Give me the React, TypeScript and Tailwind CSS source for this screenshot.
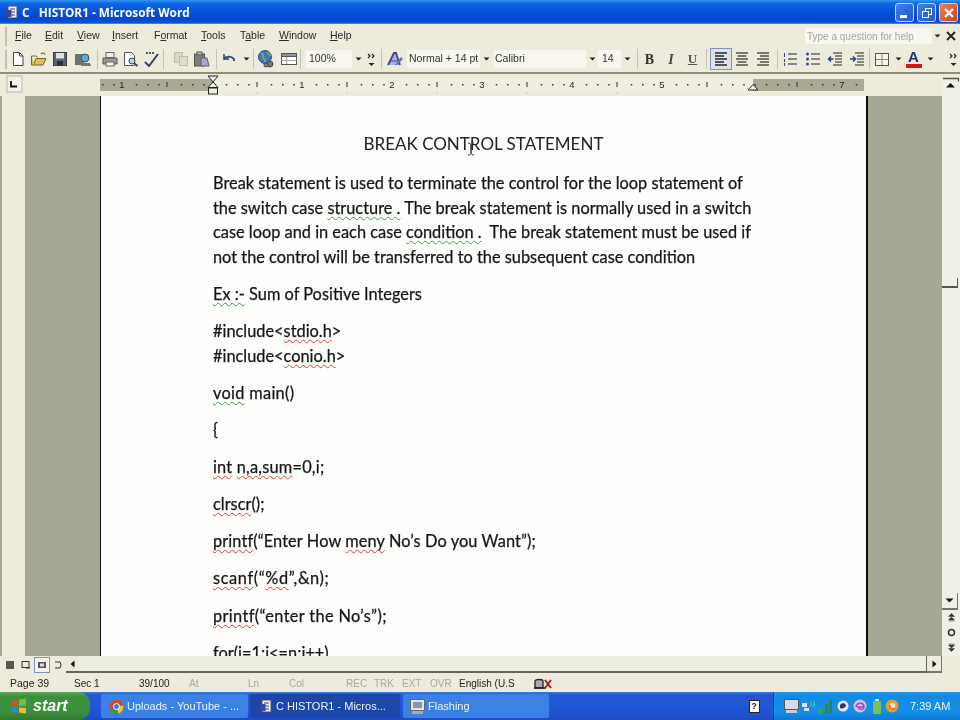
import React from "react";

const S = ({ w = 16, h = 16, children }: { w?: number; h?: number; children: React.ReactNode }) => (
  <svg width={w} height={h} viewBox={`0 0 ${w} ${h}`} fill="none" className="block">{children}</svg>
);

const Drop = () => <S w={7} h={4}><path d="M0.5 0.5h6L3.5 3.5z" fill="#222" /></S>;
const More = () => (
  <S w={9} h={15}>
    <path d="M1 2l2 2-2 2M5 2l2 2-2 2" stroke="#222" strokeWidth="1.1" />
    <path d="M1.5 11h6L4.5 14z" fill="#222" />
  </S>
);
const Sep = () => (
  <div className="w-[3px] h-[20px] shrink-0 flex justify-center">
    <div className="w-[1px] h-full bg-[#c4c3b0]" />
  </div>
);

const New = () => <S><path d="M3.5 1.5h6l3.5 3.5v9.5h-9.5z" fill="#fff" stroke="#444" /><path d="M9.5 1.5v3.5h3.5" stroke="#444" /></S>;
const Open = () => (
  <S w={18}>
    <path d="M1.5 5v9h11.500l3-6.500h-10l-2 5" fill="#e0bf50" stroke="#7a6220" />
    <path d="M1.500 5h5l1 1.500" stroke="#7a6220" />
    <path d="M11 3c1.500-1.500 3-1 4 .5" stroke="#3d8a3d" strokeWidth="1.300" />
  </S>
);
const Save = () => (
  <S>
    <rect x="1.500" y="1.500" width="13" height="13" fill="#5c6470" stroke="#383d44" />
    <rect x="4" y="2" width="8" height="5.500" fill="#dfe2e6" />
    <rect x="5" y="10" width="6" height="4" fill="#2c3036" />
  </S>
);
const Perm = () => (
  <S w={18}>
    <rect x="1" y="3" width="9" height="11" fill="#6f7370" />
    <circle cx="11" cy="7" r="4" fill="#5fa8c8" stroke="#355" />
    <rect x="7" y="12" width="9" height="3" fill="#6a7a80" />
    <path d="M14 14h3" stroke="#b33" />
  </S>
);
const Print = () => (
  <S w={18}>
    <rect x="5" y="1.500" width="8" height="5" fill="#eee" stroke="#666" />
    <path d="M2 7h14v6H2z" fill="#9a9a8e" stroke="#555" />
    <rect x="5" y="11" width="8" height="4" fill="#f2f2f2" stroke="#666" />
  </S>
);
const Preview = () => (
  <S w={18}>
    <path d="M2.500 1.500h7l3 3v10h-10z" fill="#fff" stroke="#555" />
    <circle cx="10" cy="10" r="3" fill="#bcd6e6" stroke="#345" />
    <path d="M12 12l3.500 3" stroke="#345" strokeWidth="1.800" />
  </S>
);
const Spell = () => (
  <S w={17}>
    <path d="M2 11l4 4 9-12" stroke="#3a3f6e" strokeWidth="2" />
    <path d="M3 2h9" stroke="#555" strokeDasharray="2 1" strokeWidth="2" />
  </S>
);
const Copy = () => (
  <S>
    <rect x="1.500" y="1.500" width="8" height="10" fill="#d7d6c8" stroke="#bfbeae" />
    <rect x="6.500" y="5.500" width="8" height="9" fill="#dedccd" stroke="#bfbeae" />
  </S>
);
const Paste = () => (
  <S w={18}>
    <rect x="1.500" y="3" width="10" height="12" fill="#807f70" stroke="#55554a" />
    <rect x="4" y="1" width="5" height="3" fill="#bbb" stroke="#555" />
    <path d="M8 7h6l2 8H8z" fill="#a8a6cf" stroke="#5a5a8c" />
  </S>
);
const Undo = () => (
  <S><path d="M3 3v5h5" stroke="#2d3f73" strokeWidth="1.500" /><path d="M3 8c2-3 7-3.500 10 0v2" stroke="#2d3f73" strokeWidth="1.800" /></S>
);
const Globe = () => (
  <S w={19} h={18}>
    <circle cx="8" cy="7" r="6.500" fill="#3d79b8" stroke="#27517f" />
    <path d="M4 3c2 1 3 2 2 4s3 2 2 5M10 2c1 2 3 2 4 4" stroke="#7fb070" strokeWidth="1.600" />
    <circle cx="13" cy="14" r="3" fill="#777" stroke="#444" />
    <circle cx="9" cy="15" r="2" fill="#888" stroke="#444" />
  </S>
);
const TableIcon = () => (
  <S w={18}>
    <rect x="1.500" y="2.500" width="15" height="11" fill="#fff" stroke="#555" />
    <rect x="1.500" y="2.500" width="15" height="3" fill="#8d93a8" stroke="#555" />
    <path d="M6.500 6v7M1.500 9.500h15" stroke="#aaa" />
  </S>
);
const Styles = () => (
  <S w={18}>
    <path d="M2 14L8 2h2l4 12" stroke="#35488f" strokeWidth="1.800" fill="#a9b4dc" />
    <path d="M4 10h10" stroke="#35488f" />
    <path d="M9 14l6-8 2 2-6 6z" fill="#5d71b5" />
  </S>
);
const Lines = ({ kind }: { kind: "l" | "c" | "r" }) => {
  const rows = [2, 5, 8, 11, 14];
  const len = [12, 9, 12, 9, 12];
  return (
    <S w={14}>
      {rows.map((y, i) => {
        const x = kind === "l" ? 1 : kind === "c" ? 1 + (12 - len[i]) / 2 : 13 - len[i];
        return <rect key={y} x={x} y={y - 1} width={len[i]} height={2} fill={kind === "l" ? "#555" : "#77776c"} />;
      })}
    </S>
  );
};
const NumList = () => (
  <S w={16}>
    <path d="M2.500 2v4M2.500 8v3M2.500 12v3" stroke="#35488f" />
    <path d="M6 3h9M6 8h9M6 13h9" stroke="#666" strokeWidth="1.300" />
  </S>
);
const Bullets = () => (
  <S w={16}>
    <circle cx="2.500" cy="3" r="1.500" fill="#35488f" />
    <circle cx="2.500" cy="8" r="1.500" fill="#35488f" />
    <circle cx="2.500" cy="13" r="1.500" fill="#35488f" />
    <path d="M6 3h9M6 8h9M6 13h9" stroke="#666" strokeWidth="1.300" />
  </S>
);
const Outdent = ({ right = false }: { right?: boolean }) => (
  <S w={16}>
    <path d="M6 2h9M8 5h7M8 8h7M8 11h7M6 14h9" stroke="#666" strokeWidth="1.300" />
    <path d={right ? "M1 8h5M4 5.500L6.500 8 4 10.500" : "M1.500 8h5M4 5.500L1.500 8 4 10.500"} stroke="#1e3f8c" strokeWidth="1.400" />
  </S>
);
const Border = () => (
  <S w={16}>
    <rect x="1.500" y="2.500" width="13" height="12" fill="#f6f6f0" stroke="#55554d" />
    <path d="M8 3v11M2 8.500h12" stroke="#88887c" />
  </S>
);
const FontColor = () => (
  <div className="flex flex-col items-center">
    <span className="text-[15px] leading-[13px] font-bold text-[#23356d] font-['Liberation_Sans',sans-serif]">A</span>
    <div className="w-[16px] h-[4px] bg-[#d3151c] mt-[1px]" />
  </div>
);

const Cell = ({ w, children, className = "" }: { w: number; children?: React.ReactNode; className?: string }) => (
  <div style={{ width: w }} className={`flex items-center justify-center shrink-0 ${className}`}>{children}</div>
);

const Grip = () => <div className="w-[2px] h-[19px] bg-[#c2c1ae] shrink-0" />;

const Combo = ({ w, text, pad = 3 }: { w: number; text: string; pad?: number }) => (
  <div style={{ width: w, paddingLeft: pad }} className="h-[18px] bg-[#f7f6ef] flex items-center shrink-0 text-[10.500px] text-[#333]">{text}</div>
);

const menu: [string, number][] = [
  ["File", 30], ["Edit", 32], ["View", 35], ["Insert", 42], ["Format", 47], ["Tools", 39], ["Table", 39], ["Window", 51], ["Help", 30],
];
const under: Record<string, number> = { File: 0, Edit: 0, View: 0, Insert: 0, Format: 1, Tools: 0, Table: 1, Window: 0, Help: 0 };

const Ruler = () => {
  const dots = [];
  for (let i = 0; i < 68; i++) {
    dots.push(102 + i * 11.25);
  }
  const nums: [string, number][] = [["1", 122], ["1", 302], ["2", 392], ["3", 482], ["4", 572], ["5", 662], ["7", 842]];
  const bigs = [167, 257, 347, 437, 527, 617, 707, 797];
  return (
    <svg width="960" height="22" viewBox="0 2 960 22" className="block">
      <rect x="100" y="7" width="113" height="12" fill="#a9a994" />
      <rect x="213" y="7" width="540" height="12" fill="#efeee2" />
      <rect x="753" y="7" width="111" height="12" fill="#a9a994" />
      <rect x="7" y="4" width="15" height="16" fill="#f3f2ea" stroke="#b9b8a6" />
      <path d="M11 9v5.500h6" stroke="#111" strokeWidth="1.800" fill="none" />
      {dots.map((x) => {
        const near = nums.some(([, n]) => Math.abs(n - x) < 5) || bigs.some((b) => Math.abs(b - x) < 5);
        return near ? null : <rect key={x} x={x} y={12} width={1.500} height={1.500} fill="#333" />;
      })}
      {bigs.map((x) => <rect key={x} x={x - 0.500} y={10} width={1} height={5} fill="#333" />)}
      {bigs.slice(1, 6).map((x) => <rect key={`f${x}`} x={x - 0.500} y={20} width={1} height={2} fill="#c8c7b4" />)}
      {nums.map(([t, x], i) => (
        <text key={i} x={x} y={16} fontSize="9.500" fill="#222" textAnchor="middle" fontFamily="Liberation Sans, sans-serif">{t}</text>
      ))}
      <path d="M208 4h10l-5 6z" fill="#efeee2" stroke="#222" />
      <path d="M213 10l5 5.500h-10z" fill="#efeee2" stroke="#222" />
      <rect x="208.500" y="16" width="9" height="6" fill="#efeee2" stroke="#222" />
      <path d="M753 12.500l5 5.500h-10z" fill="#f4f3ea" stroke="#222" />
      {/* top of the vertical scrollbar: the arrow button */}
      <rect x="943" y="6" width="17" height="18" fill="#f1f0e8" />
      <path d="M943 6.500h15.500v3" stroke="#55554a" strokeWidth="1.300" fill="none" />
      <path d="M950.500 11l4.500 4.500h-9z" fill="#111" />
    </svg>
  );
};

const R = ({ children }: { children: React.ReactNode }) => (
  <span className="underline decoration-wavy decoration-[#e03a3a] decoration-1 underline-offset-2 [text-decoration-skip-ink:none]">{children}</span>
);
const G = ({ children }: { children: React.ReactNode }) => (
  <span className="underline decoration-wavy decoration-[#3d9a4a] decoration-1 underline-offset-2 [text-decoration-skip-ink:none]">{children}</span>
);

const P = ({ children, className = "" }: { children: React.ReactNode; className?: string }) => <p className={`mb-[12.550px] ${className}`}>{children}</p>;

const ViewBtn = ({ active, d }: { active?: boolean; d: React.ReactNode }) => (
  <div className={`w-[16px] h-[16px] flex items-center justify-center shrink-0 ${active ? "border border-[#7f93b8] bg-[#f3f4f2]" : ""}`}>{d}</div>
);

const ScrollBtn = ({ children, className = "" }: { children: React.ReactNode; className?: string }) => (
  <div className={`flex items-center justify-center ${className}`}>{children}</div>
);

const TaskBtn = ({ w, active, icon, label, pad = 7 }: { w: number; active?: boolean; icon: React.ReactNode; label: string; pad?: number }) => (
  <div style={{ width: w, paddingLeft: pad }} className={`h-[24px] rounded-[2px] flex items-center gap-[3px] shrink-0 text-[11px] text-[#eef3fb] ${active ? "bg-[#1c46a8]" : "bg-[#3a81e6]"}`}>
    {icon}
    <span className="whitespace-nowrap overflow-hidden">{label}</span>
  </div>
);

const WordIcon = () => (
  <S w={14} h={15}>
    <rect x="3" y="1" width="9" height="12" fill="#f2f2f2" stroke="#444a7a" />
    <path d="M5 4h5M5 7h5M5 10h5" stroke="#333a8a" />
    <rect x="0.500" y="5" width="6" height="7" fill="#3b43a0" />
  </S>
);

export default function App() {
  return (
    <div className="w-[960px] h-[720px] overflow-hidden flex flex-col bg-[#ecebdc] font-['Liberation_Sans',sans-serif] blur-[0.500px] relative">
      {/* title bar */}
      <div className="h-[24px] shrink-0 flex items-center pt-[2px] pl-[5px] pr-[2px] bg-[linear-gradient(to_bottom,#2f9af0_0%,#1168e6_14%,#0753dc_45%,#0248cf_85%,#0a55dc_100%)] border-b border-[#2c86ec]">
        <WordIcon />
        <span className="ml-[3px] text-[11.800px] font-bold text-white whitespace-pre font-['Open_Sans',sans-serif]">C   HISTOR1 - Microsoft Word</span>
        <div className="ml-auto flex gap-[3px]">
          <div className="w-[19px] h-[19px] rounded-[3px] border border-[#c6d6f2] bg-[linear-gradient(135deg,#3f7fe8,#2458cf)] flex items-end pl-[4px] pb-[3px]">
            <div className="w-[7px] h-[3px] bg-white" />
          </div>
          <div className="w-[19px] h-[19px] rounded-[3px] border border-[#c6d6f2] bg-[linear-gradient(135deg,#3f7fe8,#2458cf)] flex items-center justify-center">
            <S w={12} h={12}>
              <rect x="4.500" y="1.500" width="6" height="6" stroke="#fff" />
              <rect x="1.500" y="4.500" width="6" height="6" stroke="#fff" fill="#2e66d6" />
            </S>
          </div>
          <div className="w-[19px] h-[19px] rounded-[3px] border border-[#e8d0c4] bg-[linear-gradient(135deg,#e8835c,#c8401c)] flex items-center justify-center">
            <S w={12} h={12}><path d="M2 2l8 8M10 2l-8 8" stroke="#fff" strokeWidth="2.200" /></S>
          </div>
        </div>
      </div>

      {/* menu bar */}
      <div className="h-[22px] shrink-0 flex items-center pt-[2px] pl-[5px] pr-[2px] text-[10.500px] text-[#2a2a2a]">
        <Grip />
        <div className="w-[8px] shrink-0" />
        {menu.map(([m, w]) => (
          <div key={m} style={{ width: w }} className="shrink-0">
            <span>
              {m.split("").map((c, i) => (
                <span key={i} className={i === under[m] ? "underline" : ""}>{c}</span>
              ))}
            </span>
          </div>
        ))}
        <div className="ml-auto w-[127px] h-[16px] bg-[#f8f8f2] text-[10px] text-[#a5a59e] flex items-center pl-[2px] shrink-0">Type a question for help</div>
        <Cell w={10}><Drop /></Cell>
        <Cell w={2} />
        <Cell w={14}><S w={10} h={10}><path d="M1 1l8 8M9 1l-8 8" stroke="#222" strokeWidth="1.800" /></S></Cell>
      </div>

      {/* toolbar */}
      <div className="h-[28px] shrink-0 flex items-center pl-[5px] text-[#333] border-b-2 border-[#8e8d78]">
        <Grip />
        <Cell w={1} />
        <Cell w={20}><New /></Cell>
        <Cell w={21}><Open /></Cell>
        <Cell w={21}><Save /></Cell>
        <Cell w={26}><Perm /></Cell>
        <Sep />
        <Cell w={21}><Print /></Cell>
        <Cell w={21}><Preview /></Cell>
        <Cell w={21}><Spell /></Cell>
        <Sep />
        <Cell w={5} />
        <Cell w={21}><Copy /></Cell>
        <Cell w={21}><Paste /></Cell>
        <Cell w={3} />
        <Sep />
        <Cell w={22}><Undo /></Cell>
        <Cell w={12}><Drop /></Cell>
        <Sep />
        <Cell w={23}><Globe /></Cell>
        <Cell w={21}><TableIcon /></Cell>
        <Sep />
        <Cell w={4} />
        <Combo w={46} text="100%" />
        <Cell w={12}><Drop /></Cell>
        <Cell w={14}><More /></Cell>
        <Cell w={2} />
        <Sep />
        <Cell w={2} />
        <Cell w={19}><Styles /></Cell>
        <Cell w={3} />
        <Combo w={73} text="Normal + 14 pt" pad={2} />
        <Cell w={12}><Drop /></Cell>
        <Cell w={2} />
        <Combo w={92} text="Calibri" pad={1} />
        <Cell w={12}><Drop /></Cell>
        <Combo w={23} text="14" pad={4} />
        <Cell w={12}><Drop /></Cell>
        <Cell w={3} />
        <Sep />
        <Cell w={21}><span className="font-['Liberation_Serif',serif] font-bold text-[14px] text-[#333]">B</span></Cell>
        <Cell w={22}><span className="font-['Liberation_Serif',serif] font-bold italic text-[14px] text-[#444]">I</span></Cell>
        <Cell w={21}><span className="font-['Liberation_Serif',serif] font-bold underline text-[13px] text-[#555]">U</span></Cell>
        <Cell w={2} />
        <Sep />
        <Cell w={2} />
        <Cell w={22} className="h-[22px] border border-[#7f93b8] bg-[#dfe3e8]"><Lines kind="l" /></Cell>
        <Cell w={19}><Lines kind="c" /></Cell>
        <Cell w={23}><Lines kind="r" /></Cell>
        <Cell w={2} />
        <Sep />
        <Cell w={22}><NumList /></Cell>
        <Cell w={23}><Bullets /></Cell>
        <Cell w={22}><Outdent /></Cell>
        <Cell w={22}><Outdent right /></Cell>
        <Sep />
        <Cell w={21}><Border /></Cell>
        <Cell w={12}><Drop /></Cell>
        <Cell w={19}><FontColor /></Cell>
        <Cell w={14}><Drop /></Cell>
        <Cell w={9} />
        <Cell w={14}><More /></Cell>
      </div>

      {/* ruler */}
      <div className="h-[22px] shrink-0">
        <Ruler />
      </div>

      {/* document area */}
      <div className="h-[560px] shrink-0 flex">
        <div className="w-[25px] shrink-0 border-l-2 border-[#a8a794]" />
        <div className="w-[75px] shrink-0 bg-[#a6a896]" />
        <div className="w-[768px] shrink-0 border-l border-r-2 border-[#111] bg-[#fdfdfb] overflow-hidden relative">
          <div className="pt-[36px] pl-[112px] font-['Lato','Liberation_Sans',sans-serif] text-[16.350px] leading-[24.600px] text-[#161616] whitespace-nowrap [-webkit-text-stroke:0.250px_#161616]">
            <div className="text-center -ml-[112px] mb-[14.400px] text-[17px] text-[#222] [-webkit-text-stroke:0px]">BREAK CONTROL STATEMENT</div>
            <P>
              Break statement is used to terminate the control for the loop statement of<br />
              the switch case <G>structure .</G> The break statement is normally used in a switch<br />
              case loop and in each case <G>condition .</G>&nbsp; The break statement must be used if<br />
              not the control will be transferred to the subsequent case condition
            </P>
            <P><G>Ex :-</G> Sum of Positive Integers</P>
            <P>
              #include&lt;<R>stdio.h</R>&gt;<br />
              #include&lt;<R>conio.h</R>&gt;
            </P>
            <P className="tracking-[0.3px]"><G>void</G> main()</P>
            <P>{"{"}</P>
            <P className="tracking-[0.2px]"><R>int</R> <R>n,a,sum</R>=0,i;</P>
            <P><R>clrscr</R>();</P>
            <P className="tracking-[0.1px]"><R>printf</R>(“Enter How <R>meny</R> No’s Do you Want”);</P>
            <P className="tracking-[0.6px]"><R>scanf</R>(“<R>%d</R>”,&amp;n);</P>
            <P className="tracking-[0.35px]"><R>printf</R>(“enter the No’s”);</P>
            <P>for(i=1;i&lt;=n;i++)</P>
          </div>
          <svg width="8" height="14" viewBox="0 0 8 14" className="absolute left-[366px] top-[46px]">
            <path d="M1 1c2 0 3 1 3 2v8c0 1-1 2-3 2M7 1c-2 0-3 1-3 2v8c0 1 1 2 3 2" stroke="#333" fill="none" />
          </svg>
        </div>
        <div className="w-[74px] shrink-0 bg-[#a6a896]" />
        <div className="w-[18px] shrink-0 flex flex-col bg-[#f1f0e8]">
          <div className="h-[192px] shrink-0 flex flex-col justify-end">
            <div className="h-[10px] border-r border-b-2 border-[#55554a] mr-[2px]" />
          </div>
          <div className="flex-1" />
          <ScrollBtn className="h-[17px] shrink-0 border-r border-b-2 border-[#77766a] mr-[2px]">
            <S w={9} h={5}><path d="M0.500 0.500h8l-4 4z" fill="#111" /></S>
          </ScrollBtn>
          <ScrollBtn className="h-[15px] shrink-0">
            <S w={7} h={9}><path d="M3.500 0.500l3 3h-6zM3.500 4l3 3h-6zM0.500 8h6" fill="#333" stroke="#333" strokeWidth="0.500" /></S>
          </ScrollBtn>
          <ScrollBtn className="h-[15px] shrink-0">
            <S w={9} h={9}><circle cx="4.500" cy="4.500" r="3" stroke="#333" strokeWidth="1.500" /></S>
          </ScrollBtn>
          <ScrollBtn className="h-[15px] shrink-0 mb-[1px]">
            <S w={7} h={9}><path d="M0.500 1h6M3.500 8.500l3-3h-6zM3.500 5l3-3h-6z" fill="#333" stroke="#333" strokeWidth="0.500" /></S>
          </ScrollBtn>
        </div>
      </div>

      {/* horizontal scrollbar */}
      <div className="h-[17px] shrink-0 flex items-center pl-[2px]">
        <ViewBtn d={<div className="w-[8px] h-[8px] bg-[#555]" />} />
        <ViewBtn d={<S w={10} h={10}><rect x="1" y="1.500" width="7" height="6" stroke="#333" /><path d="M5 8h4" stroke="#333" /></S>} />
        <ViewBtn active d={<S w={10} h={10}><rect x="1" y="2" width="8" height="6" fill="#555" /><rect x="3" y="3.500" width="4" height="3" fill="#ddd" /></S>} />
        <ViewBtn d={<S w={10} h={10}><path d="M2 2h5l1 3-1 3H2" stroke="#333" /></S>} />
        <Cell w={13} className="h-[17px] border-b-2 border-[#66655a]"><S w={5} h={8}><path d="M4.500 0.500v7l-4-3.500z" fill="#111" /></S></Cell>
        <div className="w-[848px] h-[17px] shrink-0 bg-[#efeee2] border-r border-b-2 border-[#66655a]" />
        <div className="w-[15px] h-[17px] flex items-center justify-center border-r border-b-2 border-[#77766a] shrink-0">
          <S w={5} h={8}><path d="M0.500 0.500v7l4-3.500z" fill="#111" /></S>
        </div>
      </div>

      {/* status bar */}
      <div className="h-[19px] shrink-0 flex items-center pt-[2px] text-[10px] text-[#222] whitespace-nowrap">
        <Cell w={10} />
        <Cell w={64} className="justify-start! text-[10.500px]">Page 39</Cell>
        <Cell w={65} className="justify-start!">Sec 1</Cell>
        <Cell w={50} className="justify-start!">39/100</Cell>
        <Cell w={59} className="justify-start! text-[#aaa89c]">At</Cell>
        <Cell w={41} className="justify-start! text-[#aaa89c]">Ln</Cell>
        <Cell w={57} className="justify-start! text-[#aaa89c]">Col</Cell>
        <Cell w={28} className="justify-start! text-[#aaa89c]">REC</Cell>
        <Cell w={28} className="justify-start! text-[#aaa89c]">TRK</Cell>
        <Cell w={28} className="justify-start! text-[#aaa89c]">EXT</Cell>
        <Cell w={29} className="justify-start! text-[#aaa89c]">OVR</Cell>
        <Cell w={74} className="justify-start!">English (U.S</Cell>
        <S w={20} h={14}>
          <path d="M2 11V4c0-2 8-2 8 0v7z" fill="#aaa" stroke="#222" strokeWidth="1.300" />
          <path d="M1 11h12" stroke="#222" strokeWidth="1.500" />
          <path d="M12 3l6 8M18 3l-6 8" stroke="#b02020" strokeWidth="2" />
        </S>
      </div>

      {/* taskbar */}
      <div className="h-[28px] shrink-0 flex items-center bg-[linear-gradient(to_bottom,#3a80e0_0%,#2358d2_10%,#2158d8_50%,#1c4cc4_100%)]">
        <div className="w-[90px] h-[28px] shrink-0 rounded-r-[12px] bg-[linear-gradient(to_bottom,#5fa55f_0%,#3d8f3d_15%,#3b913b_70%,#2f7a2f_100%)] flex items-center pl-[11px] gap-[5px]">
          <S w={17} h={16}>
            <path d="M1 3l6-1.500v6L1 8z" fill="#d94d2a" />
            <path d="M8 1.500l7-1v7l-7 .5z" fill="#7cb93c" />
            <path d="M1 9l6 .5v5.500l-6-1z" fill="#3e7fd6" />
            <path d="M8 9.500l7 .5v5.500l-7-1z" fill="#ecbd2e" />
          </S>
          <span className="text-[16px] font-bold italic text-white leading-none">start</span>
        </div>
        <Cell w={11} />
        <TaskBtn
          w={147}
          pad={8}
          icon={
            <S w={15} h={15}>
              <circle cx="7.500" cy="7.500" r="7" fill="#d9452f" />
              <path d="M7.500 7.500L1 11a7 7 0 0 0 8 3.500z" fill="#3b9a48" />
              <path d="M7.500 7.500l6.800-1a7 7 0 0 1-5 8z" fill="#f4c430" />
              <circle cx="7.500" cy="7.500" r="3" fill="#3d7fe0" stroke="#fff" />
            </S>
          }
          label="Uploads - YouTube - ..."
        />
        <Cell w={2} />
        <TaskBtn w={150} active pad={9} icon={<WordIcon />} label="C  HISTOR1 - Micros..." />
        <Cell w={3} />
        <TaskBtn
          w={146}
          icon={
            <S w={15} h={15}>
              <rect x="0.500" y="0.500" width="14" height="11" fill="#dfe5ee" stroke="#666" />
              <rect x="3" y="3" width="9" height="6" fill="#8a94a8" />
              <rect x="2" y="12" width="11" height="3" fill="#aaa" />
            </S>
          }
          label="Flashing"
        />
        <div className="flex-1" />
        <Cell w={12}>
          <div className="w-[11px] h-[13px] bg-white border border-[#222] text-[9px] leading-[11px] text-center font-bold text-[#222]">?</div>
        </Cell>
        <Cell w={13} />
        <div className="w-[187px] h-[28px] shrink-0 bg-[linear-gradient(to_bottom,#2a9ae8_0%,#138ae4_15%,#1490e8_70%,#0f78d4_100%)] border-l border-[#0c3fa8] flex items-center pl-[9px] text-[11px] text-[#eef3fb]">
          <Cell w={17}>
            <S w={15} h={14}><rect x="0.500" y="0.500" width="14" height="10" fill="#d4dcea" stroke="#555" /><rect x="2" y="11" width="11" height="3" fill="#ccc" /></S>
          </Cell>
          <Cell w={17}>
            <S w={15} h={12}><rect x="1" y="3" width="5" height="4" fill="#dfe8f4" /><rect x="3" y="8" width="5" height="3" fill="#cfe0f0" /><path d="M9 2c2 1 2 3 0 4M12 1c2 2 2 4 0 6" stroke="#7fe08f" fill="none" /></S>
          </Cell>
          <Cell w={17}>
            <S w={14} h={15}>
              <rect x="0" y="11" width="2" height="4" fill="#46a83c" />
              <rect x="3" y="8" width="2" height="7" fill="#3f9c34" />
              <rect x="6" y="5" width="3" height="10" fill="#2f8a2a" />
              <rect x="10" y="1" width="3" height="14" fill="#2f8a2a" />
            </S>
          </Cell>
          <Cell w={18}><S w={12} h={13}><circle cx="6" cy="6" r="5.500" fill="#dfe6f0" /><path d="M3 5c2-3 6-2 6 1-1 2-4 3-6 2z" fill="#3a3560" /></S></Cell>
          <Cell w={16}><S w={14} h={14}><circle cx="7" cy="7" r="6.500" fill="#ccc0ea" /><path d="M3 8c1-5 8-5 8 0H5c1 3 4 3 6 1" stroke="#b33fae" strokeWidth="1.500" fill="none" /></S></Cell>
          <Cell w={17}><S w={8} h={15}><rect x="2" y="0" width="4" height="2" fill="#ddd" /><rect x="0" y="2" width="8" height="13" rx="1" fill="#78c052" /></S></Cell>
          <Cell w={14}><S w={14} h={14}><circle cx="7" cy="7" r="6.500" fill="#ec9d1e" /><circle cx="7.500" cy="7" r="3" fill="#f8e8c8" /><path d="M5 6a3 3 0 0 0 5 3" stroke="#b83a10" fill="none" /></S></Cell>
          <span className="ml-[11px] whitespace-nowrap">7:39 AM</span>
        </div>
      </div>
    </div>
  );
}
